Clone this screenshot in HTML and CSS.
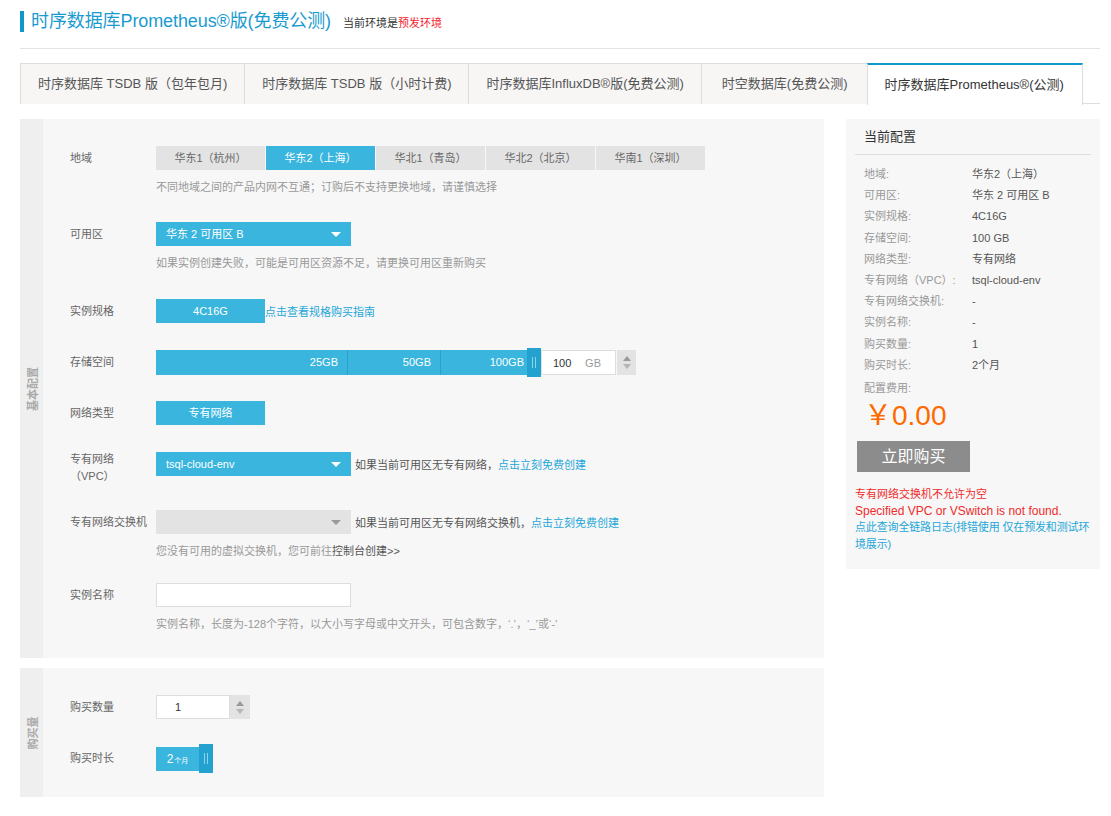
FILE: index.html
```html
<!DOCTYPE html>
<html lang="zh-CN">
<head>
<meta charset="utf-8">
<title>时序数据库Prometheus®版(免费公测)</title>
<link rel="stylesheet" href="styles.css">
</head>
<body>
<div class="page">
  <div class="header">
    <h1 class="title">时序数据库Prometheus®版(免费公测)</h1>
    <span class="env">当前环境是<em>预发环境</em></span>
  </div>

  <div class="tabs">
    <div class="tab">时序数据库 TSDB 版（包年包月)</div>
    <div class="tab">时序数据库 TSDB 版（小时计费)</div>
    <div class="tab">时序数据库InfluxDB®版(免费公测)</div>
    <div class="tab wide">时空数据库(免费公测)</div>
    <div class="tab active">时序数据库Prometheus®(公测)</div>
  </div>

  <div class="main">
    <div class="left">
      <div class="section">
        <div class="side"><span>基本配置</span></div>
        <div class="body">
          <div class="row">
            <div class="label">地域</div>
            <div class="ctrl">
              <div class="regions">
                <div class="region">华东1（杭州）</div>
                <div class="region on">华东2（上海）</div>
                <div class="region">华北1（青岛）</div>
                <div class="region">华北2（北京）</div>
                <div class="region">华南1（深圳）</div>
              </div>
              <div class="hint">不同地域之间的产品内网不互通；订购后不支持更换地域，请谨慎选择</div>
            </div>
          </div>

          <div class="row zone">
            <div class="label">可用区</div>
            <div class="ctrl">
              <div class="select">华东 2 可用区 B<i class="caret"></i></div>
              <div class="hint">如果实例创建失败，可能是可用区资源不足，请更换可用区重新购买</div>
            </div>
          </div>

          <div class="row">
            <div class="label">实例规格</div>
            <div class="ctrl inline">
              <div class="btn">4C16G</div><a class="link">点击查看规格购买指南</a>
            </div>
          </div>

          <div class="row storage">
            <div class="label">存储空间</div>
            <div class="ctrl inline">
              <div class="slider">
                <div class="seg s1">25GB</div>
                <div class="seg s2">50GB</div>
                <div class="seg s3">100GB</div>
              </div>
              <div class="handle"><i></i><i></i></div>
              <div class="numbox"><span class="num">100</span><span class="unit">GB</span></div>
              <div class="spin"><i class="up"></i><i class="down"></i></div>
            </div>
          </div>

          <div class="row">
            <div class="label">网络类型</div>
            <div class="ctrl">
              <div class="btn">专有网络</div>
            </div>
          </div>

          <div class="row vpc">
            <div class="label two">专有网络<br>（VPC）</div>
            <div class="ctrl inline">
              <div class="select">tsql-cloud-env<i class="caret"></i></div>
              <span class="aside">如果当前可用区无专有网络，<a class="link">点击立刻免费创建</a></span>
            </div>
          </div>

          <div class="row sw">
            <div class="label">专有网络交换机</div>
            <div class="ctrl">
              <div class="inline">
                <div class="select grey"><i class="caret"></i></div>
                <span class="aside">如果当前可用区无专有网络交换机，<a class="link">点击立刻免费创建</a></span>
              </div>
              <div class="hint">您没有可用的虚拟交换机，您可前往<a class="dark">控制台创建&gt;&gt;</a></div>
            </div>
          </div>

          <div class="row last">
            <div class="label">实例名称</div>
            <div class="ctrl">
              <div class="textbox"></div>
              <div class="hint">实例名称，长度为-128个字符，以大小写字母或中文开头，可包含数字，‘.’，‘_’或‘-’</div>
            </div>
          </div>
        </div>
      </div>

      <div class="section second">
        <div class="side"><span>购买量</span></div>
        <div class="body">
          <div class="row">
            <div class="label">购买数量</div>
            <div class="ctrl inline">
              <div class="numbox qty"><span class="num">1</span></div>
              <div class="spin"><i class="up"></i><i class="down"></i></div>
            </div>
          </div>
          <div class="row last">
            <div class="label">购买时长</div>
            <div class="ctrl inline">
              <div class="dur">2<small>个月</small></div>
              <div class="handle"><i></i><i></i></div>
            </div>
          </div>
        </div>
      </div>
    </div>

    <div class="right">
      <div class="cfg-head">当前配置</div>
      <dl class="cfg">
        <div class="kv"><dt>地域:</dt><dd>华东2（上海）</dd></div>
        <div class="kv"><dt>可用区:</dt><dd>华东 2 可用区 B</dd></div>
        <div class="kv"><dt>实例规格:</dt><dd>4C16G</dd></div>
        <div class="kv"><dt>存储空间:</dt><dd>100 GB</dd></div>
        <div class="kv"><dt>网络类型:</dt><dd>专有网络</dd></div>
        <div class="kv"><dt>专有网络（VPC）:</dt><dd>tsql-cloud-env</dd></div>
        <div class="kv"><dt>专有网络交换机:</dt><dd>-</dd></div>
        <div class="kv"><dt>实例名称:</dt><dd>-</dd></div>
        <div class="kv"><dt>购买数量:</dt><dd>1</dd></div>
        <div class="kv"><dt>购买时长:</dt><dd>2个月</dd></div>
      </dl>
      <div class="fee-label">配置费用:</div>
      <div class="price">￥0.00</div>
      <div class="buy">立即购买</div>
      <div class="errors">
        <div class="err">专有网络交换机不允许为空</div>
        <div class="err en">Specified VPC or VSwitch is not found.</div>
        <a class="link">点此查询全链路日志(排错使用 仅在预发和测试环境展示)</a>
      </div>
    </div>
  </div>
</div>
</body>
</html>
```

FILE: styles.css
```css
* { box-sizing: border-box; }
html, body { margin: 0; padding: 0; background: #fff; }
body {
  font-family: "Liberation Sans", "Noto Sans CJK SC", sans-serif;
  font-size: 11px;
  color: #333;
}
a { text-decoration: none; cursor: pointer; }

.page { padding: 0 11px 0 20px; }

/* header */
.header {
  display: flex;
  align-items: center;
  padding: 11px 0 16px;
  border-bottom: 1px solid #e3e3e3;
}
.title {
  margin: 0;
  font-size: 18px;
  font-weight: normal;
  line-height: 21px;
  color: #1a9bd0;
  border-left: 4px solid #0d98c9;
  padding-left: 7px;
  letter-spacing: -0.1px;
}
.env { margin-left: 12px; font-size: 11px; color: #333; }
.env em { font-style: normal; color: #f5222d; }

/* tabs */
.tabs {
  display: flex;
  margin-top: 14px;
  height: 41px;
  border-bottom: 1px solid #ddd;
}
.tab {
  padding: 0 17px;
  height: 41px;
  line-height: 40px;
  font-size: 13px;
  color: #555;
  background: #f7f6f5;
  border: 1px solid #ddd;
  border-bottom: none;
  margin-right: -1px;
  white-space: nowrap;
}
.tab.wide { padding: 0 19px 0 20px; }
.tab.active {
  background: #fff;
  color: #333;
  border-top: 2px solid #0d98c9;
  line-height: 39px;
  height: 42px;
  position: relative;
  z-index: 1;
  padding: 0 18px 0 17px;
}

/* main */
.main { display: flex; gap: 22px; margin-top: 15px; align-items: flex-start; }
.left { width: 804px; }
.section { display: flex; background: #f7f7f7; }
.section.second { margin-top: 10px; }
.side {
  width: 23px;
  flex: none;
  background: #efefef;
  display: flex;
  align-items: center;
  justify-content: center;
}
.side span {
  white-space: nowrap;
  transform: rotate(-90deg);
  font-size: 11px;
  font-weight: bold;
  color: #a9a9a9;
  width: 0;
  display: flex;
  justify-content: center;
}
.body { flex: 1; padding: 27px 0 26px 27px; }

.row { display: flex; align-items: flex-start; margin-bottom: 27px; }
.row.zone { margin-bottom: 28px; }
.row.storage { margin-bottom: 26px; }
.row.vpc { margin-bottom: 25px; }
.row.sw { margin-bottom: 24px; }
.row.last { margin-bottom: 0; }
.label {
  width: 86px;
  flex: none;
  line-height: 24px;
  color: #666;
  font-size: 11px;
}
.label.two { line-height: 17px; margin-top: -1px; }
.ctrl { display: flex; flex-direction: column; }
.ctrl.inline, .inline { flex-direction: row; display: flex; align-items: center; }
.hint { margin-top: 9px; line-height: 16px; color: #999; font-size: 11px; }
.hint .dark { color: #555; }

.regions { display: flex; gap: 1px; }
.region {
  width: 109px;
  height: 24px;
  line-height: 24px;
  text-align: center;
  background: #e3e3e3;
  color: #666;
}
.region.on { background: #39b5de; color: #fff; }

.select {
  position: relative;
  width: 195px;
  height: 24px;
  line-height: 24px;
  padding-left: 10px;
  background: #39b5de;
  color: #fff;
}
.select.grey { background: #e3e3e3; }
.caret {
  position: absolute;
  right: 10px;
  top: 10px;
  width: 0;
  height: 0;
  border-left: 5px solid transparent;
  border-right: 5px solid transparent;
  border-top: 5px solid #fff;
}
.select.grey .caret { border-top-color: #999; }
.aside { margin-left: 4px; color: #555; }
.link { color: #1ea7d9; }

.btn {
  width: 109px;
  height: 24px;
  line-height: 24px;
  text-align: center;
  background: #39b5de;
  color: #fff;
}

/* slider */
.slider {
  display: flex;
  width: 371px;
  height: 25px;
  background: #39b5de;
  color: #fff;
}
.seg { line-height: 25px; text-align: right; }
.s1 { width: 192px; padding-right: 9px; border-right: 1px solid #2aa0cc; }
.s2 { width: 93px; padding-right: 9px; border-right: 1px solid #2aa0cc; }
.s3 { width: 86px; padding-right: 3px; }
.handle {
  width: 14px;
  height: 29px;
  margin: -2px 0;
  background: #24a2cf;
  display: flex;
  align-items: center;
  justify-content: center;
  gap: 2px;
}
.handle i { display: block; width: 1px; height: 11px; background: #8cd3ec; }
.numbox {
  width: 75px;
  height: 25px;
  background: #fff;
  border: 1px solid #ddd;
  display: flex;
  align-items: center;
  padding-left: 11px;
}
.num { color: #333; }
.unit { margin-left: auto; margin-right: 14px; color: #999; }
.spin {
  width: 19px;
  height: 25px;
  margin-left: 1px;
  background: #e3e3e3;
  display: flex;
  flex-direction: column;
  align-items: center;
  justify-content: center;
  gap: 3px;
}
.spin i { display: block; width: 0; height: 0; border-left: 4px solid transparent; border-right: 4px solid transparent; }
.spin .up { border-bottom: 5px solid #999; }
.spin .down { border-top: 5px solid #b5b5b5; }

.textbox { width: 195px; height: 24px; background: #fff; border: 1px solid #ddd; }

.numbox.qty { width: 74px; height: 24px; padding-left: 18px; }
.qty + .spin { margin-left: 0; width: 20px; height: 24px; }

.dur {
  width: 43px;
  height: 24px;
  line-height: 24px;
  background: #39b5de;
  color: #fff;
  text-align: center;
  font-size: 12px;
}
.dur small { font-size: 7px; margin-left: 1px; }

/* right */
.right {
  flex: 1;
  background: #f7f7f7;
  padding: 0 5px 17px 9px;
}
.cfg-head {
  height: 36px;
  line-height: 36px;
  padding-left: 9px;
  margin-right: 4px;
  font-size: 13px;
  color: #333;
  border-bottom: 1px solid #ddd;
}
.cfg { margin: 9px 0 0; }
.kv { display: flex; line-height: 21.2px; padding-left: 9px; }
.kv dt { width: 108px; color: #999; }
.kv dd { margin: 0; color: #555; }
.fee-label { margin-top: 2px; padding-left: 9px; line-height: 21px; color: #999; }
.price {
  padding-left: 9px;
  font-size: 28px;
  line-height: 34px;
  color: #ff6a00;
}
.buy {
  margin: 8px 0 0 2px;
  width: 113px;
  height: 31px;
  line-height: 31px;
  text-align: center;
  background: #8c8c8c;
  color: #fff;
  font-size: 16px;
}
.errors { margin-top: 14px; line-height: 16.5px; font-size: 11px; }
.err { color: #f02b2b; }
.err.en { font-size: 12px; }
.errors .link { letter-spacing: -0.15px; }
```
